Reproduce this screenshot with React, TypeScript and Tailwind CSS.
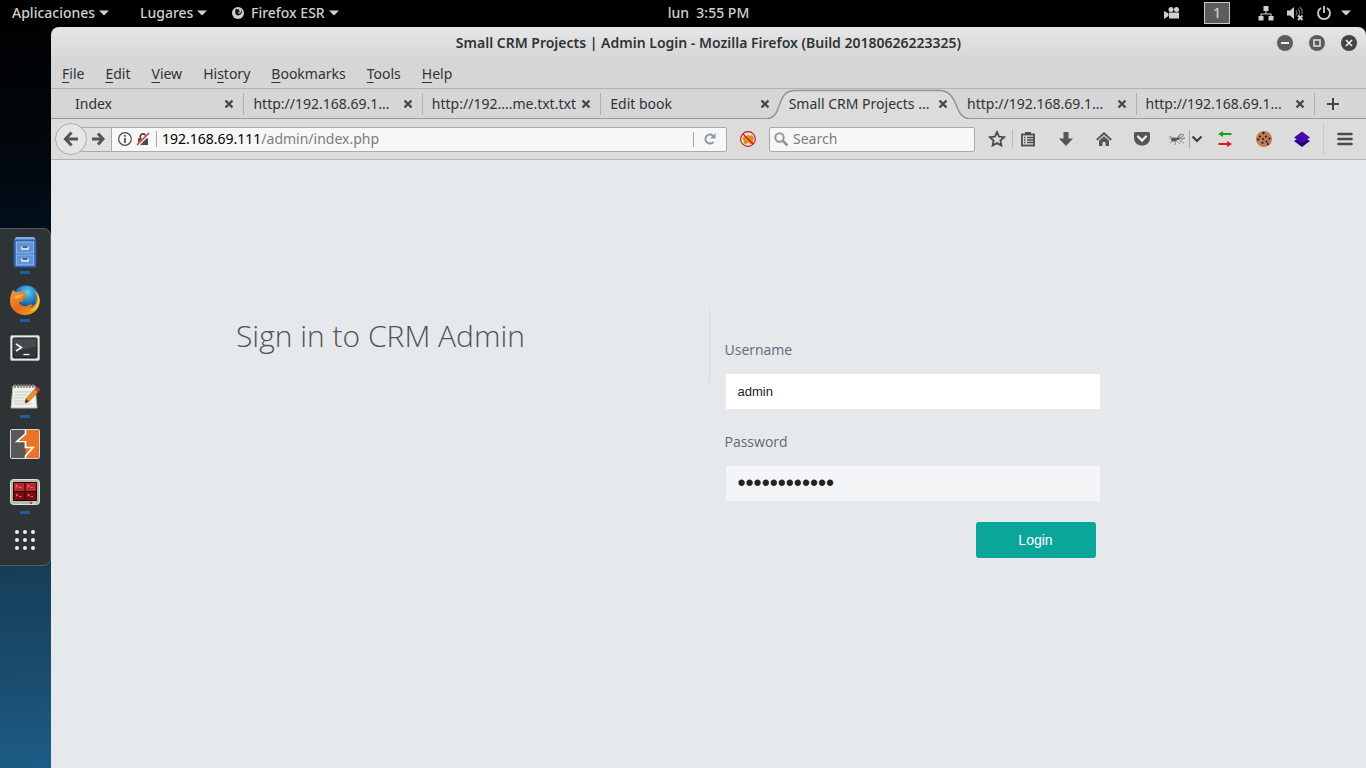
import React from 'react';

const UI = "font-['Noto_Sans',sans-serif]";

function Caret() {
  return (
    <svg width="10" height="6" viewBox="0 0 10 6" fill="currentColor" aria-hidden="true">
      <path d="M0 .5h10L5 5.5z" />
    </svg>
  );
}

function TopBar() {
  return (
    <header className="grid h-[27px] shrink-0 grid-cols-[1fr_auto_1fr] items-center bg-black text-sm font-medium text-[#d0d0d0]">
      <nav className="flex h-[26px] items-center self-start pl-3">
        <button type="button" className="flex w-32 items-center gap-1">
          Aplicaciones <Caret />
        </button>
        <button type="button" className="flex w-[91px] items-center gap-1">
          Lugares <Caret />
        </button>
        <button type="button" className="flex items-center gap-1">
          <svg width="16" height="14" viewBox="0 0 16 14" aria-hidden="true">
            <circle cx="7" cy="7" r="6" fill="#d0d0d0" />
            <path d="M5 2.500l1.500 1 2-.3-.8 1.600 1.300.8-1 1-1.500-.2c.4 1.200 1.600 1.500 2.600.8 1.200-1 1.300-2.600.6-4.200 1.500 1.500 1.600 3.900.1 5.300C8.100 9.900 5.500 9.800 4.600 7.700 4 6.200 4.200 4 5 2.500z" fill="#111" />
          </svg>
          Firefox ESR <Caret />
        </button>
      </nav>
      <time className="h-[26px] self-start pl-[51px] leading-[26px] whitespace-pre">lun  3:55 PM</time>
      <div className="flex h-[26px] items-center justify-end self-start pr-[15px]">
        <svg width="16" height="14" viewBox="0 0 16 14" fill="#d0d0d0" aria-hidden="true" className="mr-6">
          <circle cx="7" cy="3.500" r="2.500" />
          <circle cx="12.500" cy="3.500" r="2.500" />
          <path d="M5 6.500h10v6H5zM0 5l4.500 2.500v2.500L0 13z" />
        </svg>
        <span className="mr-7 flex h-[22px] w-[26px] items-center justify-center border border-[#c8c8c8] bg-[#5c5c5c]">
          1
        </span>
        <div className="flex items-center gap-3">
          <svg width="16" height="16" viewBox="0 0 16 16" fill="#d0d0d0" aria-hidden="true">
            <path d="M5.500 1h5v5h-5zM.5 11h5v4.500h-5zM10.500 11h5v4.500h-5zM7.500 6h1v3h-1zM2.500 8.500h11V11h-1V9.500h-9V11h-1z" />
          </svg>
          <svg width="18" height="16" viewBox="0 0 18 16" fill="none" aria-hidden="true">
            <path d="M1 5.500h3L8 2v12L4 10.500H1z" fill="#d0d0d0" />
            <path d="M10 5.500q1.500 2.500 0 5M12 3.500q3 4.500 0 8.500M14 2q3 3.500 2 7" stroke="#666" strokeWidth="1.300" />
            <path d="M12 10.500l4.500 4.500m0-4.500L12 15" stroke="#d0d0d0" strokeWidth="1.800" />
          </svg>
          <svg width="16" height="16" viewBox="0 0 16 16" fill="none" stroke="#d0d0d0" strokeWidth="1.800" aria-hidden="true">
            <path d="M5 3a6 6 0 1 0 6 0M8 1v7" />
          </svg>
        </div>
        <span className="ml-[9px]">
          <Caret />
        </span>
      </div>
    </header>
  );
}

function CabinetIcon() {
  return (
    <svg width="30" height="32" viewBox="0 0 30 32" aria-hidden="true">
      <path d="M6 1h18l2 3H4z" fill="#7fabe6" />
      <rect x="4" y="4" width="22" height="27" rx="1" fill="#3e73bd" stroke="#2b579a" />
      <rect x="6.500" y="6" width="17" height="11" fill="#5c93db" stroke="#8cb5ec" />
      <rect x="6.500" y="19" width="17" height="10" fill="#5c93db" stroke="#8cb5ec" />
      <path d="M12 10.500v2.500h6v-2.500M12 22.500v2.500h6v-2.500" fill="none" stroke="#eee" strokeWidth="1.500" />
      <path d="M12.500 11h5M12.500 23h5" stroke="#333" strokeWidth="1.200" />
    </svg>
  );
}

function FirefoxIcon() {
  return (
    <svg width="32" height="32" viewBox="0 0 32 32" aria-hidden="true">
      <defs>
        <radialGradient id="globe" cx=".55" cy=".25" r=".7">
          <stop offset="0" stopColor="#5fd0f5" />
          <stop offset=".5" stopColor="#1d7fc4" />
          <stop offset="1" stopColor="#0b2f6e" />
        </radialGradient>
        <linearGradient id="fox" x1="0" y1="0" x2="1" y2="1">
          <stop offset="0" stopColor="#f4a13a" />
          <stop offset=".5" stopColor="#e66a1c" />
          <stop offset="1" stopColor="#f0b429" />
        </linearGradient>
      </defs>
      <circle cx="17" cy="15" r="13.500" fill="url(#globe)" />
      <path d="M4 6l3 2.500c1.500-.8 3-1 4.500-.5l4-2-1 4c1 1 2.500 1.300 4 1.500-.5 2-2.500 2.500-4.500 3.500-.5 1 0 2 0 3-1.500-.5-3-.3-4 .7 1.500 3 5 4.300 8.500 3 2-.7 3-2 5-1.200-.5 1.500-2 2.700-3.500 3.200 6-1 8.500-6 7.500-12l-2-5c4 3 6 8 5 13-1.500 7-7.500 11.300-14.500 11.300C8 31 1 25 1 17c0-4 1-8 3-11z" fill="url(#fox)" />
      <path d="M25.500 7.500c4 4 4.500 11 .5 15.500-2 2.200-4 3.500-6 4 7.500.5 11-6 10.500-12-.4-3-2-6-5-7.500z" fill="#f9cf3c" />
      <path d="M5 14c2-3 5-3 9.500-3.500-1.500 2.500-4 3-6 4z" fill="#f9b650" />
    </svg>
  );
}

function TerminalIcon() {
  return (
    <svg width="32" height="28" viewBox="0 0 32 28" aria-hidden="true">
      <rect x="1.500" y="1.500" width="29" height="25" rx="1.500" fill="#e8e8e6" stroke="#aaa" />
      <rect x="4" y="4" width="24" height="20" rx="1" fill="#333638" stroke="#111" />
      <path d="M4.500 4.500h23v8l-23 5z" fill="#555859" opacity=".6" />
      <path d="M7 10l5.500 3.500L7 17" fill="none" stroke="#fff" strokeWidth="1.500" />
      <path d="M14.500 20.500h6" stroke="#fff" strokeWidth="1.300" />
    </svg>
  );
}

function NotesIcon() {
  return (
    <svg width="32" height="28" viewBox="0 0 32 28" aria-hidden="true">
      <path d="M4 4h22l2 22H2z" fill="#f2f1e9" stroke="#b9b8ae" />
      <path d="M6 2v4m3-4v4m3-4v4m3-4v4m3-4v4m3-4v4m3-4v4" stroke="#777" strokeWidth="1.500" />
      <path d="M6 10h18M6 13h14M5 16h14M5 19h11M5 22h18" stroke="#c7c7c2" />
      <path d="M17 17l9-10 3 3-9 9.500-4 1.500z" fill="#ef8f29" stroke="#a75b13" strokeWidth=".7" />
      <path d="M26 7l2-2.500 3.500 3L29 10z" fill="#d9372c" />
      <path d="M17 17l3 2.500-4 1.500z" fill="#333" />
    </svg>
  );
}

function BurpIcon() {
  return (
    <svg width="32" height="32" viewBox="0 0 32 32" aria-hidden="true">
      <rect x="1.500" y="1.500" width="29" height="29" rx="1" fill="#58585a" />
      <path d="M16.500 2v4L8 13.500h8.500v6H24L16.500 28v2H30V2z" fill="#ea7327" />
      <path d="M8 13.500L16.500 6v7.500z" fill="#58585a" />
      <path d="M16.500 19.500H24L16.500 28z" fill="#ea7327" />
      <path d="M16.500 2v4L8 13.500h8.500v6H24L16.500 28v2" fill="none" stroke="#fff" strokeWidth="1.700" />
      <path d="M17.300 6.500v6.200H10z" fill="#ea7327" />
      <rect x="1.500" y="1.500" width="29" height="29" rx="1" fill="none" stroke="#d7d7d7" />
    </svg>
  );
}

function RedTerminalIcon() {
  return (
    <svg width="32" height="28" viewBox="0 0 32 28" aria-hidden="true">
      <rect x="1.500" y="1.500" width="29" height="25" rx="3" fill="#b9b9b2" stroke="#e2e2dd" />
      <rect x="4" y="4" width="24" height="19" rx="1" fill="#200505" />
      <path d="M5 5h10.500v8H5zM16.500 5H27v8H16.500z" fill="#c22531" />
      <path d="M5 14h10.500v8H5zM16.500 14H27v8H16.500z" fill="#7e0a10" />
      <path d="M7 7l2 1-2 1m3 .5h2.500M18.500 7l2 1-2 1m3 .5h2.500M7 16l2 1-2 1m3 .5h2.500M18.500 16l2 1-2 1m3 .5h2.500" fill="none" stroke="#e08a8a" strokeWidth=".8" />
      <path d="M21 25h2" stroke="#e01515" strokeWidth="1.500" />
      <path d="M24.500 25h2" stroke="#eee" />
    </svg>
  );
}

function GridIcon() {
  return (
    <svg width="24" height="24" viewBox="0 0 24 24" fill="#eee" aria-hidden="true">
      {[4, 12, 20].map((y) => [4, 12, 20].map((x) => <circle key={`${x}-${y}`} cx={x} cy={y} r="2" />))}
    </svg>
  );
}

const dockItems = [
  { name: 'Files', icon: <CabinetIcon />, running: true },
  { name: 'Firefox', icon: <FirefoxIcon />, running: true },
  { name: 'Terminal', icon: <TerminalIcon />, running: false },
  { name: 'Notes', icon: <NotesIcon />, running: true },
  { name: 'Burp Suite', icon: <BurpIcon />, running: false },
  { name: 'Terminator', icon: <RedTerminalIcon />, running: true },
  { name: 'Show applications', icon: <GridIcon />, running: false },
];

function Dock() {
  return (
    <aside className="flex w-[51px] shrink-0 flex-col justify-center bg-[linear-gradient(175deg,#000102_0%,#01070d_18%,#021220_30%,#0c2c43_55%,#163f5a_74%,#1a4d70_88%,#1d5c86_100%)] pb-0.5">
      <ul className="flex flex-col rounded-r-lg border border-l-0 border-[#555b5d] bg-[#2e3436]">
        {dockItems.map((item) => (
          <li key={item.name}>
            <button
              type="button"
              aria-label={item.name}
              className="flex h-12 w-full flex-col items-center"
            >
              <span className="flex h-[46px] shrink-0 items-center">{item.icon}</span>
              {item.running && <span className="-mt-1 h-[3px] w-2.5 shrink-0 bg-[#215d9c]" />}
            </button>
          </li>
        ))}
      </ul>
    </aside>
  );
}

function TitleBar() {
  return (
    <div className="grid h-8 grid-cols-[1fr_auto_1fr] items-center">
      <h1 className="col-start-2 text-sm font-semibold text-[#2e3436]">
        Small CRM Projects | Admin Login - Mozilla Firefox (Build 20180626223325)
      </h1>
      <div className="flex justify-end gap-4 pr-[9px]">
        <button type="button" aria-label="Minimize">
          <svg width="16" height="16" viewBox="0 0 16 16">
            <circle cx="8" cy="8" r="8" fill="#5c5c5c" />
            <path d="M4 8h8" stroke="#eee" strokeWidth="2" />
          </svg>
        </button>
        <button type="button" aria-label="Maximize">
          <svg width="16" height="16" viewBox="0 0 16 16">
            <circle cx="8" cy="8" r="8" fill="#5c5c5c" />
            <rect x="5" y="5" width="6" height="6" fill="none" stroke="#ddd" strokeWidth="1.600" />
          </svg>
        </button>
        <button type="button" aria-label="Close window">
          <svg width="16" height="16" viewBox="0 0 16 16">
            <circle cx="8" cy="8" r="8" fill="#444" />
            <path d="M5 5l6 6m0-6l-6 6" stroke="#eee" strokeWidth="1.700" />
          </svg>
        </button>
      </div>
    </div>
  );
}

const menus: [string, string, string][] = [
  ['', 'F', 'ile'],
  ['', 'E', 'dit'],
  ['', 'V', 'iew'],
  ['Hi', 's', 'tory'],
  ['', 'B', 'ookmarks'],
  ['', 'T', 'ools'],
  ['', 'H', 'elp'],
];

function MenuBar() {
  return (
    <nav className="flex h-[29px] items-center gap-[21px] pl-[11px] text-sm text-[#2e3436]">
      {menus.map(([pre, key, post]) => (
        <button type="button" key={key}>
          {pre}
          <span className="underline underline-offset-[3px]">{key}</span>
          {post}
        </button>
      ))}
    </nav>
  );
}

const tabs = [
  { title: 'Index' },
  { title: 'http://192.168.69.1...' },
  { title: 'http://192....me.txt.txt' },
  { title: 'Edit book' },
  { title: 'Small CRM Projects ...', active: true },
  { title: 'http://192.168.69.1...' },
  { title: 'http://192.168.69.1...' },
];

function TabBar() {
  return (
    <div className="flex h-[31px] items-stretch border-y border-t-[#b2b2b2] border-b-[#989898] pl-[14px] text-sm text-[#2e3436]">
      {tabs.map((tab, i) => (
        <div key={i} className="relative flex min-w-0 flex-1 items-center pl-2.5 pr-[9px]">
          {tab.active && (
            <svg
              className="absolute -left-3 top-0 h-[30px] w-[calc(100%+24px)]"
              viewBox="0 0 202 30"
              preserveAspectRatio="none"
              aria-hidden="true"
            >
              <path
                d="M0 29.500C16 29.500 8 1.500 28 1.500H172C192 1.500 186 29.500 202 29.500V30H0z"
                fill="#dcdcdc"
              />
              <path
                d="M0 29.500C16 29.500 8 1.500 28 1.500H172C192 1.500 186 29.500 202 29.500"
                fill="none"
                stroke="#8f9499"
                strokeWidth="1.500"
              />
            </svg>
          )}
          <button type="button" className="relative min-w-0 flex-1 overflow-hidden whitespace-nowrap text-left">
            {tab.title}
          </button>
          <button type="button" aria-label="Close tab" className="relative">
            <svg width="10" height="10" viewBox="0 0 10 10">
              <path d="M1.500 1.500l7 7m0-7l-7 7" stroke="#474747" strokeWidth="2.400" />
            </svg>
          </button>
          {i !== 3 && i !== 4 && <span className="absolute -right-px top-1 h-[22px] w-px bg-[#b0b0b0]" />}
          {i === 2 && <span className="absolute -right-px top-1 h-[22px] w-px bg-[#b0b0b0]" />}
        </div>
      ))}
      <button type="button" aria-label="New tab" className="flex w-[52px] shrink-0 items-center pl-[13px]">
        <svg width="12" height="12" viewBox="0 0 12 12">
          <path d="M6 0v12M0 6h12" stroke="#444" strokeWidth="2" />
        </svg>
      </button>
    </div>
  );
}

function ToolButton({ label, className, children }: { label: string; className: string; children: React.ReactNode }) {
  return (
    <button type="button" aria-label={label} className={`flex h-full shrink-0 items-center justify-center ${className}`}>
      {children}
    </button>
  );
}

function NavBar() {
  return (
    <div className="flex h-[41px] items-center border-b border-[#b2b2b2] bg-[#dcdcdc] pl-1">
      <button
        type="button"
        aria-label="Back"
        className="z-10 flex size-8 shrink-0 items-center justify-center rounded-full border border-[#aaa] bg-[#e6e6e6]"
      >
        <svg width="16" height="16" viewBox="0 0 16 16" fill="none" stroke="#555" strokeWidth="3">
          <path d="M8.500 1.500L2.500 8l6 6.500M3 8h12" />
        </svg>
      </button>
      <div className="-ml-2 flex h-[25px] min-w-0 flex-1 items-stretch rounded-r-[2px] border border-[#aaa] bg-[#f7f7f7]">
        <button
          type="button"
          aria-label="Forward"
          className="flex w-8 shrink-0 items-center justify-end border-r border-[#aaa] bg-[#e2e2e2] pr-1.5"
        >
          <svg width="13" height="14" viewBox="0 0 13 14" fill="none" stroke="#555" strokeWidth="3">
            <path d="M6 1.500L11 7l-5 5.500M0 7h10" />
          </svg>
        </button>
        <div className="flex shrink-0 items-center gap-1 pl-1.5">
          <svg width="14" height="14" viewBox="0 0 14 14" fill="none" stroke="#4a4a4a" aria-hidden="true">
            <circle cx="7" cy="7" r="6.300" strokeWidth="1.200" />
            <path d="M7 6v5M7 3v1.700" strokeWidth="1.700" />
          </svg>
          <svg width="14" height="14" viewBox="0 0 14 14" fill="none" aria-hidden="true">
            <rect x="2" y="6.500" width="10" height="6.500" fill="#4a4a4a" />
            <path d="M4.300 7V4.500a2.700 2.700 0 0 1 5.400 0V7" stroke="#4a4a4a" strokeWidth="1.700" />
            <path d="M1.500 13.500L13.500 1" stroke="#f7f7f7" strokeWidth="3" />
            <path d="M1 13L13 1" stroke="#e0302a" strokeWidth="1.500" />
          </svg>
          <span className="ml-0.5 h-4 w-px bg-[#aaa]" />
        </div>
        <a
          href="#address"
          className="flex min-w-0 flex-1 items-center overflow-hidden whitespace-nowrap pl-[5px] text-sm text-[#7c7c7c]"
        >
          <span className="text-black">192.168.69.111</span>/admin/index.php
        </a>
        <button type="button" aria-label="Reload" className="my-1 flex w-[33px] shrink-0 items-center justify-center border-l border-[#aaa]">
          <svg width="12" height="12" viewBox="0 0 12 12" fill="none">
            <path d="M9.500 8.800A4.500 4.500 0 1 1 9 2.800" stroke="#8c9bab" strokeWidth="2" />
            <path d="M11.500 0v5.500H6z" fill="#8c9bab" />
          </svg>
        </button>
      </div>
      <ToolButton label="Blocker" className="w-[42px]">
        <svg width="16" height="16" viewBox="0 0 16 16">
          <circle cx="8" cy="8" r="7.200" fill="#e8e0d4" />
          <path d="M3 8l1-2.500 2 1 2-2.500 2 1.500 2-1 1.500 3-1 2.500 1 2-3 .5-2-1.500-2 1.500-2.500-.5.500-2z" fill="#ef8b13" stroke="#a5762a" strokeWidth=".6" />
          <circle cx="8" cy="8" r="7.400" fill="none" stroke="#d01414" strokeWidth="1.100" />
          <path d="M3 3l10 10" stroke="#d01414" strokeWidth="1.100" />
        </svg>
      </ToolButton>
      <label className="flex h-[25px] w-[206px] shrink-0 items-center gap-1 rounded-[2px] border border-[#aaa] bg-[#f7f7f7] pl-1">
        <svg width="15" height="15" viewBox="0 0 15 15" fill="none" stroke="#969696" strokeWidth="2" aria-hidden="true">
          <circle cx="5.500" cy="5.500" r="4.200" />
          <path d="M8.500 8.500l5 5" strokeWidth="2.500" />
        </svg>
        <input
          type="text"
          placeholder="Search"
          aria-label="Search"
          className="min-w-0 flex-1 bg-transparent text-sm outline-none placeholder:text-[#7c7c7c]"
        />
      </label>
      <ToolButton label="Bookmark" className="ml-1.5 w-[31px]">
        <svg width="18" height="18" viewBox="0 0 18 18" fill="none" stroke="#4a4a4a" strokeWidth="1.800">
          <path d="M9 2l2.100 4.600 5 .6-3.700 3.400 1 5L9 13.100l-4.400 2.500 1-5L1.900 7.200l5-.6z" />
        </svg>
      </ToolButton>
      <span className="h-[18px] w-px shrink-0 bg-[#bbb]" />
      <ToolButton label="Bookmarks menu" className="w-[30px]">
        <svg width="16" height="16" viewBox="0 0 16 16" fill="none" stroke="#4a4a4a">
          <rect x="2" y="3.500" width="12" height="11" strokeWidth="1.800" />
          <path d="M5 2.500h6" strokeWidth="3" />
          <path d="M4 6.500h1.500M7 6.500h6M4 9h1.500M7 9h6M4 11.500h1.500M7 11.500h6" strokeWidth="1.300" />
        </svg>
      </ToolButton>
      <ToolButton label="Downloads" className="w-[46px]">
        <svg width="16" height="16" viewBox="0 0 16 16" fill="#555">
          <path d="M5.500 1h5v6.500h4.500L8 15 1 7.500h4.500z" />
        </svg>
      </ToolButton>
      <ToolButton label="Home" className="w-[30px]">
        <svg width="16" height="16" viewBox="0 0 16 16" fill="#555">
          <path d="M8 1l8 7.200-1.300 1.400L8 3.700 1.300 9.600 0 8.200z" />
          <path d="M8 5.200l5 4.400V15H9.500v-4h-3v4H3V9.600z" />
        </svg>
      </ToolButton>
      <ToolButton label="Pocket" className="w-[46px]">
        <svg width="16" height="16" viewBox="0 0 16 16" fill="none">
          <path d="M1.500 1h13q1.500 0 1.500 1.500V7c0 10-16 10-16 0V2.500Q0 1 1.500 1z" fill="#555" />
          <path d="M4 5.500l4 4 4-4" stroke="#eee" strokeWidth="2.300" strokeLinecap="round" />
        </svg>
      </ToolButton>
      <ToolButton label="Firebug" className="w-[24px]">
        <svg width="16" height="14" viewBox="0 0 16 14" fill="none" stroke="#777" strokeWidth=".7">
          <ellipse cx="5" cy="7.500" rx="3" ry="2" fill="#555" stroke="none" />
          <circle cx="9" cy="6.500" r="1.500" fill="#555" stroke="none" />
          <path d="M0 4l5 3M1 11l4-3M6 13l1-5 4 4M8 6l3-4 4 1-5 4 6-1-5 3 4 2M2 5L0 7" />
          <path d="M9 5l4-3 2 1.500L11 6z" fill="#ccc" />
        </svg>
      </ToolButton>
      <span className="h-[18px] w-px shrink-0 bg-[#aaa]" />
      <ToolButton label="Firebug menu" className="w-[13px]">
        <svg width="12" height="8" viewBox="0 0 12 8" fill="none" stroke="#3a3a3a" strokeWidth="2">
          <path d="M1.500 1.500L6 6l4.500-4.500" />
        </svg>
      </ToolButton>
      <ToolButton label="Proxy" className="w-[44px]">
        <svg width="14" height="16" viewBox="0 0 14 16">
          <path d="M0 3l5-3v2h8.500v2H5v2z" fill="#12a512" />
          <path d="M14 13l-5-3v2H.5v2H9v2z" fill="#e81515" />
        </svg>
      </ToolButton>
      <ToolButton label="Cookies" className="w-[34px]">
        <svg width="16" height="16" viewBox="0 0 16 16">
          <circle cx="8" cy="8" r="8" fill="#c07c56" />
          <g fill="#1c1009">
            <circle cx="7.500" cy="2.200" r="1.100" />
            <circle cx="4" cy="5.500" r="1" />
            <circle cx="10" cy="5.500" r="1" />
            <circle cx="2.200" cy="8.500" r="1" />
            <circle cx="7" cy="8" r=".9" />
            <circle cx="13.500" cy="7.500" r="1" />
            <circle cx="6.500" cy="11.800" r="1" />
            <circle cx="10.500" cy="10.500" r="1" />
            <circle cx="12" cy="13" r="1" />
          </g>
        </svg>
      </ToolButton>
      <ToolButton label="Layers" className="w-[42px]">
        <svg width="16" height="16" viewBox="0 0 16 16">
          <path d="M0 10l8-5 8 5-8 6z" fill="#240082" />
          <path d="M0 6.500L8 .5l8 6-8 5.500z" fill="#4a08ac" />
        </svg>
      </ToolButton>
      <span className="h-8 w-px shrink-0 bg-[#c8c8c8]" />
      <ToolButton label="Open menu" className="w-[42px]">
        <svg width="16" height="14" viewBox="0 0 16 14" stroke="#4a4a4a" strokeWidth="2.600" strokeLinecap="round">
          <path d="M1.500 2h13M1.500 7h13M1.500 12h13" />
        </svg>
      </ToolButton>
    </div>
  );
}

function LoginPage() {
  return (
    <main className="flex-1 bg-[#e5e9ec] pt-[148px] font-['Open_Sans',sans-serif]">
      <div className="mx-auto flex max-w-[975px] items-start">
        <div className="w-1/2 px-[15px] pt-1.5">
          <h2 className="text-3xl leading-[44px] font-light text-[#505458]">Sign in to CRM Admin</h2>
        </div>
        <div className="flex w-1/2">
          <span className="h-[75px] w-px shrink-0 bg-[#d9dcde]" />
          <form className="w-[390px] pt-8 pl-[15px] text-sm text-[#5e6a78]" onSubmit={(e) => e.preventDefault()}>
            <label className="block">
              <span className="block leading-5">Username</span>
              <input
                type="text"
                name="username"
                defaultValue="admin"
                className="mt-[14px] ml-px block h-[35px] w-[374px] bg-white px-3 font-['Liberation_Sans',sans-serif] text-[13px] text-[#222] outline-none"
              />
            </label>
            <label className="mt-[23px] block">
              <span className="block leading-5">Password</span>
              <input
                type="password"
                name="password"
                defaultValue="passwordpass"
                className="mt-[14px] ml-px block h-[35px] w-[374px] bg-[#f4f5f7] px-3 font-['Liberation_Sans',sans-serif] text-[23px] text-[#222] outline-none"
              />
            </label>
            <button
              type="submit"
              className="mt-[21px] mr-1 ml-auto block h-9 w-[120px] rounded-[3px] bg-[#0aa699] font-['Liberation_Sans',sans-serif] text-sm text-white"
            >
              Login
            </button>
          </form>
        </div>
      </div>
    </main>
  );
}

export default function App() {
  return (
    <div className={`flex min-h-screen flex-col bg-black ${UI}`}>
      <TopBar />
      <div className="flex flex-1">
        <Dock />
        <div className="flex min-w-0 flex-1 flex-col overflow-hidden rounded-t-lg bg-[linear-gradient(180deg,#e6e6e6_0,#d6d6d6_32px)]">
          <TitleBar />
          <MenuBar />
          <TabBar />
          <NavBar />
          <LoginPage />
        </div>
      </div>
    </div>
  );
}
